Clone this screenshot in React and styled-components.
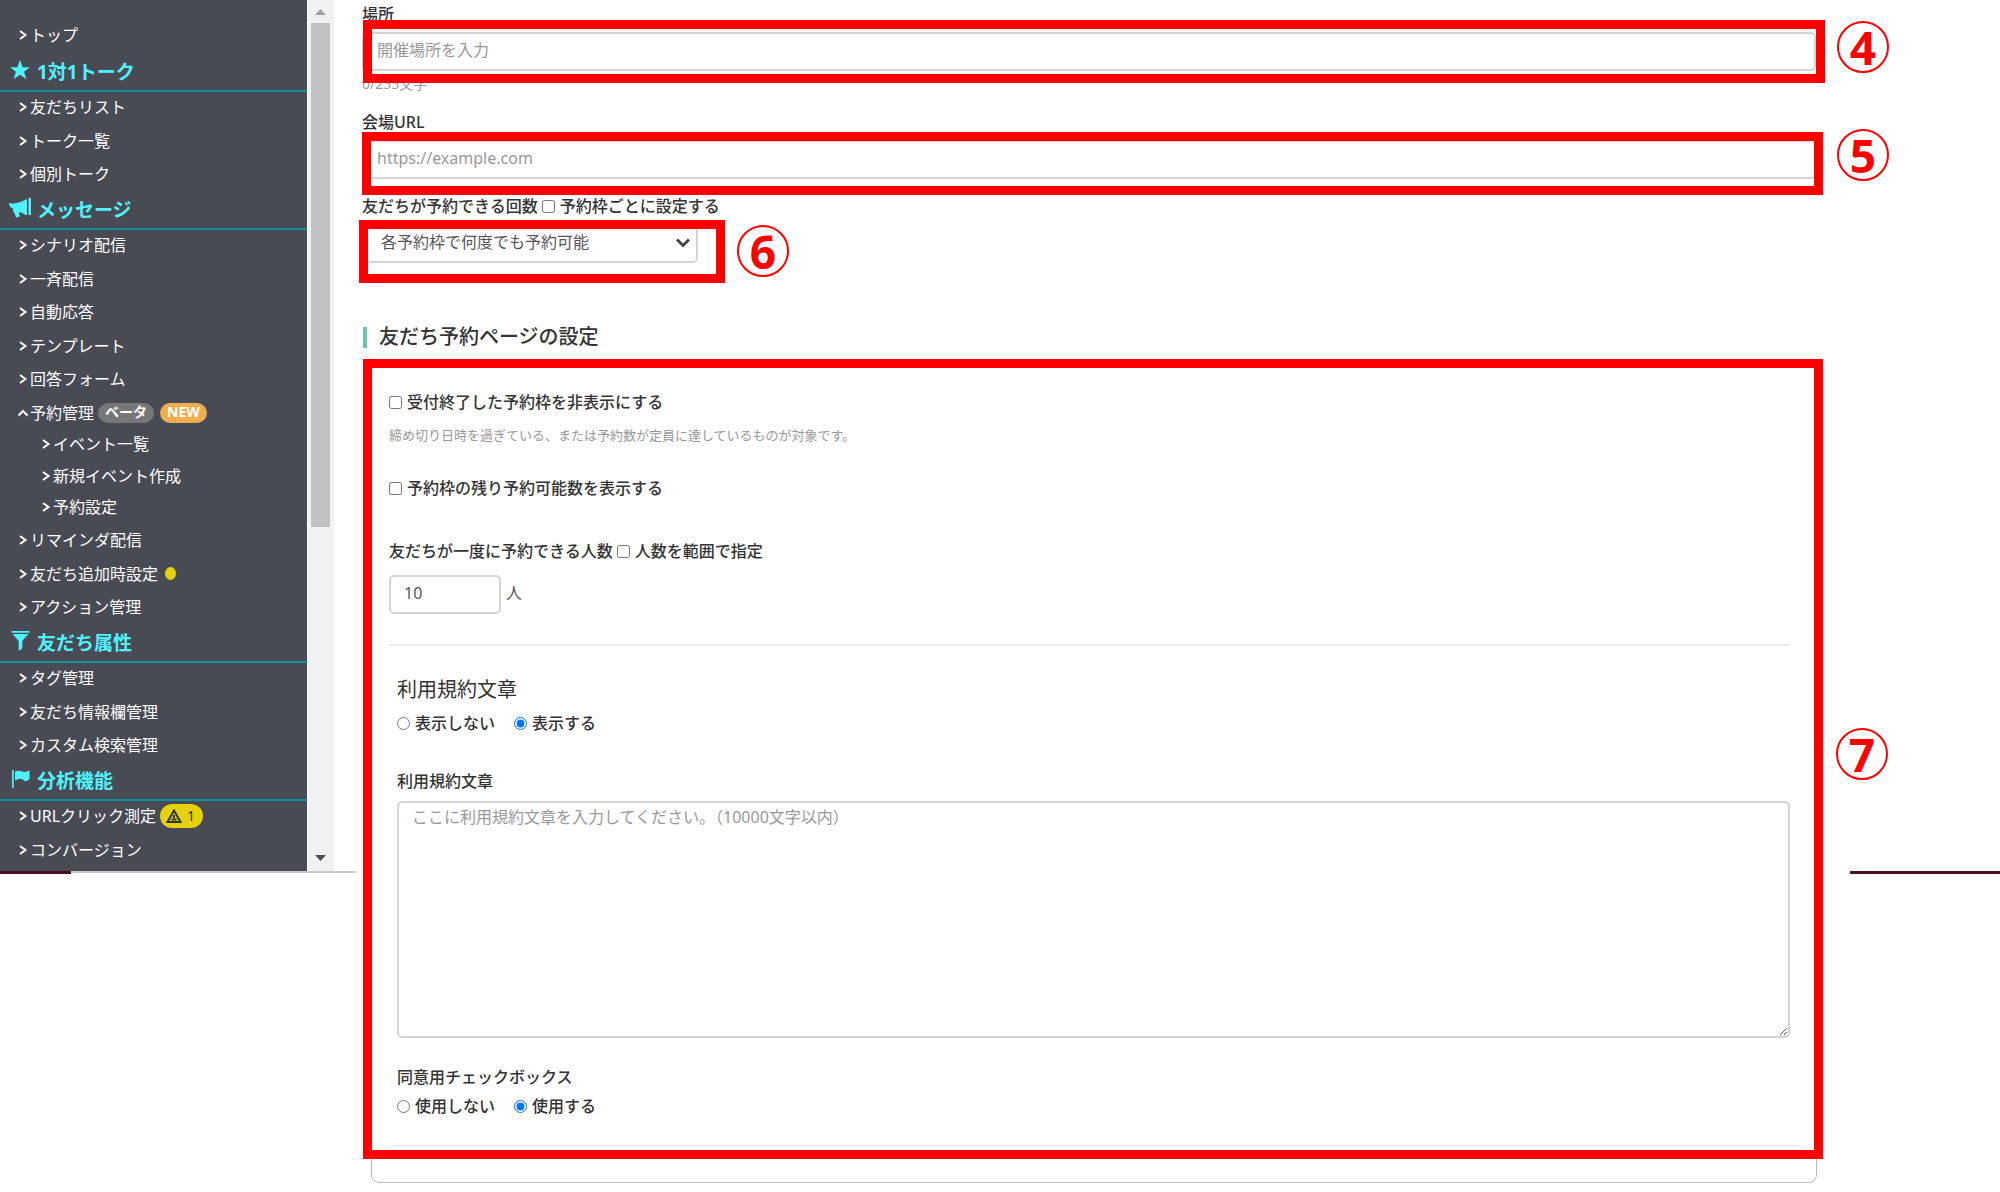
import React from "react";
import styled, { createGlobalStyle } from "styled-components";

const Global = createGlobalStyle`
  *, *::before, *::after { box-sizing: border-box; }
  body {
    margin: 0;
    background: #fff;
    color: #333;
    font-family: "Noto Sans", "Noto Sans CJK JP", sans-serif;
    font-size: 16px;
    line-height: 24px;
  }
  h2, h3, ul, p { margin: 0; padding: 0; }
  ul { list-style: none; }
`;

const Page = styled.div`
  display: grid;
  grid-template-columns: 356px minmax(0, 1fr) 150px;
  align-items: start;
`;

/* ---------- side menu ---------- */
const MenuFrame = styled.div`
  display: flex;
`;

const Menu = styled.nav`
  width: 307px;
  padding: 20px 0 3px;
  background: #484a54;
  color: #fff;
`;

const Group = styled.section``;

const GroupTitle = styled.h2`
  display: flex;
  align-items: center;
  height: 38px;
  padding-left: 9px;
  border-bottom: 2px solid #15909b;
  color: #4ff3fd;
  font-size: 19px;
  font-weight: 700;
  line-height: 28px;
`;

const GroupIcon = styled.svg`
  flex: none;
  width: 22px;
  height: 20px;
  margin: 0 6px 4px 0;
  fill: currentColor;
`;

const Items = styled.ul`
  padding-bottom: ${(p) => (p.$spaced ? "1px" : "0")};
`;

const Item = styled.li`
  &:nth-child(even) > a { height: 34px; }
`;

const ItemLink = styled.a`
  display: flex;
  align-items: center;
  height: 33px;
  padding: 0 0 3px 18px;
  color: #fff;
  text-decoration: none;
  white-space: nowrap;
`;

const SubItems = styled.ul``;

const SubItem = styled.li`
  & > a { height: 31px; padding: 0 0 5px 41px; }
  &:nth-child(even) > a { height: 32px; }
`;

const Chevron = styled.svg`
  flex: none;
  width: 10px;
  height: 12px;
  margin-right: 2px;
  fill: none;
  stroke: currentColor;
  stroke-width: 2;
`;

const Pill = styled.span`
  height: 20px;
  margin-left: ${(p) => (p.$gap || 6)}px;
  padding: 0 7px;
  border-radius: 10px;
  background: ${(p) => p.$bg};
  color: #fff;
  font-size: 14px;
  font-weight: 700;
  line-height: 18px;
`;

const AlertPill = styled.span`
  display: flex;
  align-items: center;
  gap: 5px;
  height: 24px;
  margin-left: 4px;
  padding: 0 8px 0 6px;
  border-radius: 12px;
  background: #e6d20c;
  color: #333;
  font-size: 14px;
`;

const Dot = styled.span`
  width: 11px;
  height: 13px;
  margin-left: 7px;
  border-radius: 50%;
  background: #e6d20c;
`;

const ScrollTrack = styled.div`
  display: flex;
  flex-direction: column;
  align-items: center;
  width: 27px;
  padding: 8px 4px 9px 3px;
  border-left: 1px solid #fff;
  background: #f1f1f1;
`;

const ScrollThumb = styled.div`
  flex: 0 0 59%;
  width: 19px;
  margin: 8px 0 auto;
  background: #c1c1c1;
`;

const Arrow = styled.svg`
  width: 11px;
  height: 7px;
  fill: ${(p) => p.$color};
`;

const BottomEdge = styled.div`
  height: 3px;
  border-top: 2px solid #c9c9c9;
`;

const BottomEdgeDark = styled.div`
  width: 71px;
  height: 3px;
  margin-top: -2px;
  background: #47141b;
`;

const Rail = styled.aside`
  height: 874px;
  border-bottom: 3px solid #47141b;
`;

/* ---------- form ---------- */
const Main = styled.main`
  padding: 2px 34px 8px 6px;
`;

const Label = styled.label`
  display: ${(p) => (p.$block ? "block" : "inline-flex")};
  align-items: center;
  font-weight: 500;
`;

const Field = styled.div`
  position: relative;
  width: ${(p) => p.$width || "auto"};
  margin-top: 6px;
`;

const boxed = `
  border: 2px solid #d4d4d4;
  border-radius: 5px;
  background: #fff;
  color: #555;
  font-family: inherit;
  font-size: 16px;
  outline: none;
  &::placeholder { color: #999; opacity: 1; }
`;

const TextInput = styled.input`
  ${boxed}
  display: block;
  width: ${(p) => p.$width || "100%"};
  height: 39px;
  padding: 0 13px 3px;
`;

const Select = styled.select`
  ${boxed}
  appearance: none;
  display: block;
  width: 100%;
  height: 39px;
  padding: 0 32px 3px 17px;
`;

const SelectArrow = styled.svg`
  position: absolute;
  right: 8px;
  top: 14px;
  width: 14px;
  height: 10px;
  fill: none;
  stroke: #444;
  stroke-width: 3;
  pointer-events: none;
`;

const Counter = styled.p`
  margin: 3px 0 16px;
  color: #999;
  font-size: 14px;
  line-height: 20px;
`;

const Line = styled.div`
  display: flex;
  align-items: center;
  margin-top: ${(p) => p.$top || 0}px;
`;

const Unit = styled.span`
  padding: 0 0 3px 5px;
  color: #555;
`;

const Tick = styled.input`
  flex: none;
  width: 13px;
  height: 13px;
  margin: 0 5px 0 0;
`;

const SectionTitle = styled.h2`
  display: flex;
  align-items: center;
  margin: 60px 0 12px;
  font-size: 20px;
  font-weight: 500;
  line-height: 28px;
  &::before {
    content: "";
    width: 4px;
    height: 21px;
    margin: 0 12px 0 1px;
    background: #5fcba7;
  }
`;

const Settings = styled.section`
  position: relative;
`;

const Panel = styled.div`
  margin: 0 -1px 0 9px;
  padding: 28px 26px 66px 17px;
  border: 1px solid #bbb;
  border-radius: 8px;
  line-height: 20px;
`;

const Hint = styled.p`
  margin-top: 13px;
  color: #999;
  font-size: 13px;
`;

const Rule = styled.hr`
  height: 2px;
  margin: 30px 0;
  border: 0;
  background: #eee;
`;

const Terms = styled.div`
  padding-left: 8px;
`;

const TermsTitle = styled.h3`
  font-size: 20px;
  font-weight: 400;
  line-height: 28px;
`;

const Radios = styled.div`
  display: flex;
  gap: 19px;
  margin: 9px 0 ${(p) => p.$bottom || 0}px;
`;

const TextArea = styled.textarea`
  ${boxed}
  display: block;
  width: 100%;
  height: 237px;
  margin: 10px 0 29px;
  padding: 4px 13px;
  line-height: 20px;
`;

/* ---------- callouts laid over the form ---------- */
const Frame = styled.div`
  position: absolute;
  inset: ${(p) => p.$inset};
  border: 9px solid #f00;
  pointer-events: none;
`;

const Num = styled.span`
  position: absolute;
  right: ${(p) => p.$right || "-74px"};
  top: ${(p) => p.$top};
  display: flex;
  align-items: center;
  justify-content: center;
  width: 52px;
  height: 52px;
  border: 2px solid #f00;
  border-radius: 50%;
  color: #f00;
  font-size: 46px;
  font-weight: 700;
  line-height: 46px;
`;

const glyphs = {
  star: <path d="M11 0l2.7 7.2h7.3l-5.9 4.5 2.3 7.6L11 14.7l-6.400 4.600 2.300-7.600L1 7.200h7.300z" />,
  horn: <path d="M0 5c2 .6 4 .5 6 .2 4-.4 7-1.600 10.500-3.700H18V17h-1.500c-2.500-1.700-4.500-2.500-6.500-2.900l.8 4.400-3.800 1-2-5.500-1-.2v-3.500C1.500 10 0 8 0 5zM19.500 0H22v17h-2.500z" />,
  filter: <path d="M2.500 0h18v1.800h-18zM3.500 3h16l-6.200 7v7.500L9.700 20V10z" />,
  flag: <path d="M3 1h1.700v18H3zM6 2.500c3.500-1.500 5.500-.5 8 .3 2 .5 4-.3 6.500-1.300v8.500c-1.500 1.500-3 2.500-5 2-2.500-2.500-5-2.500-9.500-.5z" />,
};

const Go = ({ up }) => (
  <Chevron viewBox="0 0 10 12" aria-hidden="true">
    <path d={up ? "M0.500 8.500L5 4l4.500 4.500" : "M2 2l5.500 4L2 10"} />
  </Chevron>
);

const Entry = ({ text, up, extra, children }) => (
  <Item>
    <ItemLink href="#"><Go up={up} />{text}{extra}</ItemLink>
    {children}
  </Item>
);

const MenuGroup = ({ icon, title, children }) => (
  <Group>
    <GroupTitle><GroupIcon viewBox="0 0 22 20" aria-hidden="true">{glyphs[icon]}</GroupIcon>{title}</GroupTitle>
    <Items>{children}</Items>
  </Group>
);

const Choice = ({ type, name, text, checked }) => (
  <Label><Tick type={type} name={name} defaultChecked={checked} />{text}</Label>
);

const Callout = ({ n, inset, top, right }) => (
  <Frame $inset={inset}><Num $top={top} $right={right}>{n}</Num></Frame>
);

export default function App() {
  return (
    <>
      <Global />
      <Page>
        <div>
          <MenuFrame>
            <Menu>
              <Items $spaced><Entry text="トップ" /></Items>
              <MenuGroup icon="star" title="1対1トーク">
                <Entry text="友だちリスト" />
                <Entry text="トーク一覧" />
                <Entry text="個別トーク" />
              </MenuGroup>
              <MenuGroup icon="horn" title="メッセージ">
                <Entry text="シナリオ配信" />
                <Entry text="一斉配信" />
                <Entry text="自動応答" />
                <Entry text="テンプレート" />
                <Entry text="回答フォーム" />
                <Entry
                  text="予約管理"
                  up
                  extra={<><Pill $bg="#777" $gap={4}>ベータ</Pill><Pill $bg="#f0ad4e">NEW</Pill></>}
                >
                  <SubItems>
                    {["イベント一覧", "新規イベント作成", "予約設定"].map((t) => (
                      <SubItem key={t}><ItemLink href="#"><Go />{t}</ItemLink></SubItem>
                    ))}
                  </SubItems>
                </Entry>
                <Entry text="リマインダ配信" />
                <Entry text="友だち追加時設定" extra={<Dot />} />
                <Entry text="アクション管理" />
              </MenuGroup>
              <MenuGroup icon="filter" title="友だち属性">
                <Entry text="タグ管理" />
                <Entry text="友だち情報欄管理" />
                <Entry text="カスタム検索管理" />
              </MenuGroup>
              <MenuGroup icon="flag" title="分析機能">
                <Entry
                  text="URLクリック測定"
                  extra={
                    <AlertPill>
                      <svg width="16" height="14" viewBox="0 0 16 14" fill="none" stroke="#333" strokeWidth="2" aria-hidden="true">
                        <path d="M8 1.500L14.500 13h-13zM8 6v3M5.500 10.500h5" />
                      </svg>
                      1
                    </AlertPill>
                  }
                />
                <Entry text="コンバージョン" />
              </MenuGroup>
            </Menu>
            <ScrollTrack>
              <Arrow $color="#a3a3a3" viewBox="0 0 11 7"><path d="M0 7l5.500-6L11 7z" /></Arrow>
              <ScrollThumb />
              <Arrow $color="#505050" viewBox="0 0 11 7"><path d="M0 0h11L5.500 6z" /></Arrow>
            </ScrollTrack>
          </MenuFrame>
          <BottomEdge><BottomEdgeDark /></BottomEdge>
        </div>

        <Main>
          <Label $block htmlFor="place">場所</Label>
          <Field>
            <TextInput id="place" placeholder="開催場所を入力" />
            <Callout n="4" inset="-12px -9px -12px 1px" top="-8px" right="-73px" />
          </Field>
          <Counter>0/255文字</Counter>

          <Label $block htmlFor="url">会場URL</Label>
          <Field>
            <TextInput id="url" placeholder="https://example.com" />
            <Callout n="5" inset="-8px -7px -16px 0" top="-12px" right="-75px" />
          </Field>

          <Line $top={15}>
            <Label htmlFor="times">友だちが予約できる回数&nbsp;</Label>
            <Choice type="checkbox" text="予約枠ごとに設定する" />
          </Line>
          <Field $width="336px">
            <Select id="times" defaultValue="any">
              <option value="any">各予約枠で何度でも予約可能</option>
            </Select>
            <SelectArrow viewBox="0 0 14 10"><path d="M1 1.500l6 6 6-6" /></SelectArrow>
            <Callout n="6" inset="-4px -27px -20px -3px" top="-4px" right="-73px" />
          </Field>

          <Settings>
            <SectionTitle>友だち予約ページの設定</SectionTitle>
            <Panel>
              <Line><Choice type="checkbox" text="受付終了した予約枠を非表示にする" /></Line>
              <Hint>締め切り日時を過ぎている、または予約数が定員に達しているものが対象です。</Hint>
              <Line $top={33}><Choice type="checkbox" text="予約枠の残り予約可能数を表示する" /></Line>
              <Line $top={43}>
                <Label htmlFor="people">友だちが一度に予約できる人数&nbsp;</Label>
                <Choice type="checkbox" text="人数を範囲で指定" />
              </Line>
              <Line $top={14}>
                <TextInput id="people" defaultValue="10" $width="112px" />
                <Unit>人</Unit>
              </Line>
              <Rule />
              <Terms>
                <TermsTitle>利用規約文章</TermsTitle>
                <Radios $bottom={38}>
                  <Choice type="radio" name="terms" text="表示しない" />
                  <Choice type="radio" name="terms" text="表示する" checked />
                </Radios>
                <Label $block htmlFor="body">利用規約文章</Label>
                <TextArea id="body" placeholder="ここに利用規約文章を入力してください。（10000文字以内）" />
                <Label as="p" $block>同意用チェックボックス</Label>
                <Radios>
                  <Choice type="radio" name="agree" text="使用しない" />
                  <Choice type="radio" name="agree" text="使用する" checked />
                </Radios>
              </Terms>
            </Panel>
            <Callout n="7" inset="36px -7px 24px 1px" top="360px" />
          </Settings>
        </Main>
        <Rail />
      </Page>
    </>
  );
}
